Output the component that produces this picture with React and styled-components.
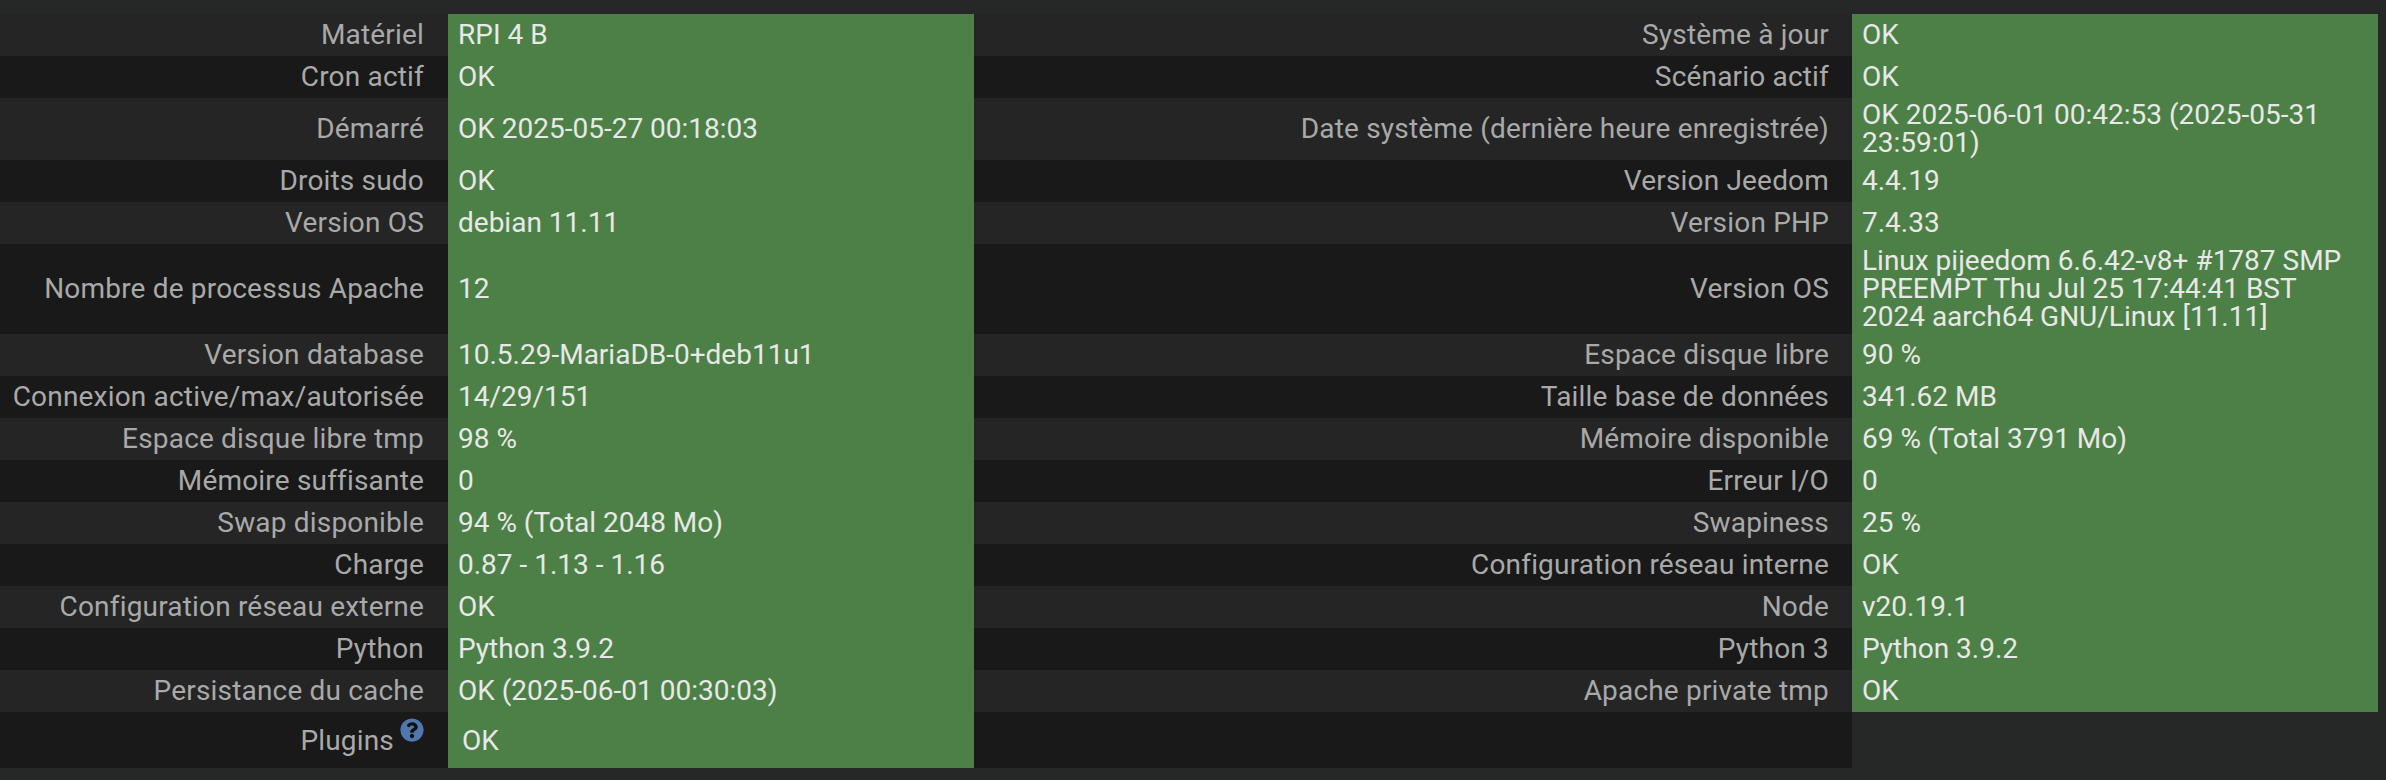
import React from "react";
import styled, { createGlobalStyle } from "styled-components";
import { FaQuestionCircle } from "react-icons/fa";

const GlobalStyle = createGlobalStyle`
  html, body {
    margin: 0;
    padding: 0;
    background: #262827;
  }
`;

const left = [
  ["Matériel", "RPI 4 B"],
  ["Cron actif", "OK"],
  ["Démarré", "OK 2025-05-27 00:18:03", 62],
  ["Droits sudo", "OK"],
  ["Version OS", "debian 11.11"],
  ["Nombre de processus Apache", "12", 90],
  ["Version database", "10.5.29-MariaDB-0+deb11u1"],
  ["Connexion active/max/autorisée", "14/29/151"],
  ["Espace disque libre tmp", "98 %"],
  ["Mémoire suffisante", "0"],
  ["Swap disponible", "94 % (Total 2048 Mo)"],
  ["Charge", "0.87 - 1.13 - 1.16"],
  ["Configuration réseau externe", "OK"],
  ["Python", "Python 3.9.2"],
  ["Persistance du cache", "OK (2025-06-01 00:30:03)"],
];

const right = [
  ["Système à jour", "OK"],
  ["Scénario actif", "OK"],
  ["Date système (dernière heure enregistrée)", "OK 2025-06-01 00:42:53 (2025-05-31 23:59:01)", 62],
  ["Version Jeedom", "4.4.19"],
  ["Version PHP", "7.4.33"],
  ["Version OS", "Linux pijeedom 6.6.42-v8+ #1787 SMP PREEMPT Thu Jul 25 17:44:41 BST 2024 aarch64 GNU/Linux [11.11]", 90],
  ["Espace disque libre", "90 %"],
  ["Taille base de données", "341.62 MB"],
  ["Mémoire disponible", "69 % (Total 3791 Mo)"],
  ["Erreur I/O", "0"],
  ["Swapiness", "25 %"],
  ["Configuration réseau interne", "OK"],
  ["Node", "v20.19.1"],
  ["Python 3", "Python 3.9.2"],
  ["Apache private tmp", "OK"],
];

const App = () => {
  return (
    <Page>
      <GlobalStyle />
      <HealthTable $width={974}>
        <tbody>
          {left.map(([label, value, height], i) => (
            <Row key={label} $height={height}>
              <LabelCell $width={448} $pad={24} $dark={i % 2 === 1}>{label}</LabelCell>
              <ValueCell>{value}</ValueCell>
            </Row>
          ))}
          <Row $height={56}>
            <PluginLabelCell $width={448} $pad={24} $dark>
              Plugins
              <HelpIcon>
                <FaQuestionCircle />
              </HelpIcon>
            </PluginLabelCell>
            <ValueCell>
              <PluginStatus>OK</PluginStatus>
            </ValueCell>
          </Row>
        </tbody>
      </HealthTable>
      <HealthTable $width={1404}>
        <tbody>
          {right.map(([label, value, height], i) => (
            <Row key={label} $height={height}>
              <LabelCell $width={878} $pad={23} $dark={i % 2 === 1}>{label}</LabelCell>
              <ValueCell>{value}</ValueCell>
            </Row>
          ))}
          <Row $height={56}>
            <LabelCell $width={878} $pad={23} $dark />
            <td />
          </Row>
        </tbody>
      </HealthTable>
    </Page>
  );
};

const Page = styled.div`
  display: flex;
  align-items: flex-start;
  box-sizing: border-box;
  width: 2386px;
  height: 780px;
  padding: 14px 8px 12px 0;
  overflow: hidden;
  background: #262827;
  font-family: Roboto, "Liberation Sans", sans-serif;
  font-size: 28px;
  line-height: 28px;
`;

const HealthTable = styled.table`
  flex: none;
  width: ${(props) => props.$width}px;
  table-layout: fixed;
  border-collapse: collapse;
  border-spacing: 0;
`;

const Row = styled.tr`
  height: ${(props) => props.$height || 42}px;
`;

const LabelCell = styled.td`
  box-sizing: border-box;
  width: ${(props) => props.$width}px;
  padding: 3px ${(props) => props.$pad}px 3px 0;
  background: ${(props) => (props.$dark ? "#191919" : "#252525")};
  color: #a9a9a9;
  letter-spacing: 0.18px;
  text-align: right;
  vertical-align: middle;
  white-space: nowrap;
`;

const PluginLabelCell = styled(LabelCell)`
  padding-bottom: 10px;
`;

const ValueCell = styled.td`
  box-sizing: border-box;
  padding: 3px 20px 3px 10px;
  background: #4d8046;
  color: #e8e8e8;
  vertical-align: middle;
`;

const PluginStatus = styled.span`
  display: inline-block;
  margin: 1px 0 0 4px;
`;

const HelpIcon = styled.sup`
  display: inline-block;
  margin-left: 6px;
  color: #5078ae;
  font-size: 24px;
  line-height: 24px;
  vertical-align: 8px;

  svg {
    display: block;
    background: radial-gradient(circle, #111 45%, transparent 46%);
    border-radius: 50%;
  }
`;

export default App;
